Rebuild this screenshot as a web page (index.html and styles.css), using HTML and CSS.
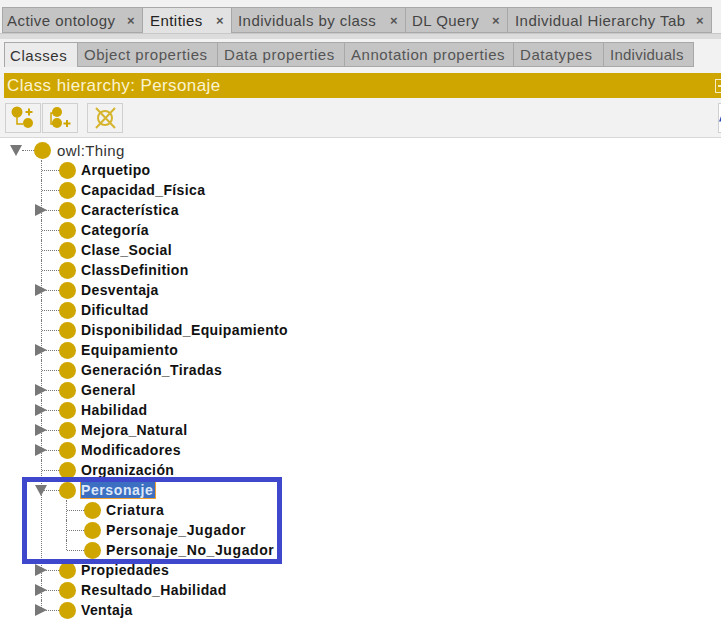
FILE: index.html
```html
<!DOCTYPE html>
<html lang="en">
<head>
    <meta charset="UTF-8">
    <meta name="viewport" content="width=device-width, initial-scale=1.0">
    <title>Class hierarchy</title>
    <link rel="stylesheet" href="styles.css">
</head>
<body>

    <div class="main-tabs">
        <div class="tab tab-1">Active ontology<span class="close">×</span></div>
        <div class="tab tab-2 active">Entities<span class="close">×</span></div>
        <div class="tab tab-3">Individuals by class<span class="close">×</span></div>
        <div class="tab tab-4">DL Query<span class="close">×</span></div>
        <div class="tab tab-5">Individual Hierarchy Tab<span class="close">×</span></div>
    </div>
    <div class="main-rule"></div>

    <div class="sub-tabs">
        <div class="sub-tab sub-1 active">Classes</div>
        <div class="sub-tab sub-2">Object properties</div>
        <div class="sub-tab sub-3">Data properties</div>
        <div class="sub-tab sub-4">Annotation properties</div>
        <div class="sub-tab sub-5">Datatypes</div>
        <div class="sub-tab sub-6">Individuals</div>
    </div>

    <div class="view-bar">
        <span>Class hierarchy: Personaje</span>
        <span class="view-btn"></span>
    </div>

    <div class="toolbar">
        <button class="tool" type="button">
            <svg width="28" height="26" viewBox="0 0 28 26">
                <circle cx="8" cy="7" r="5.5" fill="#cfa600"/>
                <circle cx="19" cy="18" r="5" fill="#cfa600"/>
                <path d="M8 12V19H14" fill="none" stroke="#cfa600" stroke-width="1.5"/>
                <path d="M16.500 7H23.500M20 3.500V10.500" fill="none" stroke="#cfa600" stroke-width="2"/>
            </svg>
        </button>
        <button class="tool" type="button">
            <svg width="28" height="26" viewBox="0 0 28 26">
                <circle cx="11" cy="7" r="5" fill="#cfa600"/>
                <circle cx="11" cy="18" r="5" fill="#cfa600"/>
                <path d="M7 8H5V19H7" fill="none" stroke="#cfa600" stroke-width="1.5"/>
                <path d="M17.500 18.500H24.500M21 15V22" fill="none" stroke="#cfa600" stroke-width="2"/>
            </svg>
        </button>
        <button class="tool tool-gap" type="button">
            <svg width="28" height="26" viewBox="0 0 28 26">
                <circle cx="14" cy="13" r="7" fill="none" stroke="#d6b52e" stroke-width="2"/>
                <path d="M5 3L24 23M24 3L5 23" fill="none" stroke="#d6b52e" stroke-width="2"/>
            </svg>
        </button>
        <span class="tool-end">
            <svg width="9" height="10" viewBox="0 0 9 10">
                <path d="M0 9L3 1L6 9Z" fill="#2b4bb0"/>
                <path d="M3 9L4.500 5L6 9Z" fill="#e08a20"/>
            </svg>
        </span>
    </div>

    <div class="tree">
        <div class="root">
            <span class="toggle down root-toggle"></span>
            <span class="root-dash"></span>
            <div class="row"><span class="dot"></span><span class="label plain">owl:Thing</span></div>
            <ul>
                <li><div class="row"><span class="dot"></span><span class="label">Arquetipo</span></div></li>
                <li><div class="row"><span class="dot"></span><span class="label">Capacidad_Física</span></div></li>
                <li><span class="toggle"></span><div class="row"><span class="dot"></span><span class="label">Característica</span></div></li>
                <li><div class="row"><span class="dot"></span><span class="label">Categoría</span></div></li>
                <li><div class="row"><span class="dot"></span><span class="label">Clase_Social</span></div></li>
                <li><div class="row"><span class="dot"></span><span class="label">ClassDefinition</span></div></li>
                <li><span class="toggle"></span><div class="row"><span class="dot"></span><span class="label">Desventaja</span></div></li>
                <li><div class="row"><span class="dot"></span><span class="label">Dificultad</span></div></li>
                <li><div class="row"><span class="dot"></span><span class="label">Disponibilidad_Equipamiento</span></div></li>
                <li><span class="toggle"></span><div class="row"><span class="dot"></span><span class="label">Equipamiento</span></div></li>
                <li><div class="row"><span class="dot"></span><span class="label">Generación_Tiradas</span></div></li>
                <li><span class="toggle"></span><div class="row"><span class="dot"></span><span class="label">General</span></div></li>
                <li><span class="toggle"></span><div class="row"><span class="dot"></span><span class="label">Habilidad</span></div></li>
                <li><span class="toggle"></span><div class="row"><span class="dot"></span><span class="label">Mejora_Natural</span></div></li>
                <li><span class="toggle"></span><div class="row"><span class="dot"></span><span class="label">Modificadores</span></div></li>
                <li><div class="row"><span class="dot"></span><span class="label">Organización</span></div></li>
                <li>
                    <span class="highlight"></span>
                    <span class="toggle down"></span>
                    <div class="row"><span class="dot"></span><span class="label selected">Personaje</span></div>
                    <ul class="nested">
                        <li><div class="row"><span class="dot"></span><span class="label">Criatura</span></div></li>
                        <li><div class="row"><span class="dot"></span><span class="label">Personaje_Jugador</span></div></li>
                        <li><div class="row"><span class="dot"></span><span class="label">Personaje_No_Jugador</span></div></li>
                    </ul>
                </li>
                <li><span class="toggle"></span><div class="row"><span class="dot"></span><span class="label">Propiedades</span></div></li>
                <li><span class="toggle"></span><div class="row"><span class="dot"></span><span class="label">Resultado_Habilidad</span></div></li>
                <li><span class="toggle"></span><div class="row"><span class="dot"></span><span class="label">Ventaja</span></div></li>
            </ul>
        </div>
    </div>

</body>
</html>
```

FILE: styles.css
```css
html, body {
    height: 100%;
}
body {
    margin: 0;
    overflow: hidden;
    background: #f2f2f2;
    font-family: "Liberation Sans", Arial, sans-serif;
    font-size: 14px;
    color: #111;
}

/* top tabs */
.main-tabs {
    display: flex;
    height: 26px;
    margin-top: 7px;
    padding-left: 2px;
}
.tab {
    display: flex;
    align-items: center;
    justify-content: space-between;
    box-sizing: border-box;
    padding: 0 5px 0 4px;
    background: #c4c4c4;
    border: 1px solid #a8a8a8;
    border-left-width: 0;
    color: #444;
    font-size: 15px;
    letter-spacing: 0.45px;
}
.tab-1 { width: 141px; border-left-width: 1px; }
.tab-2 { width: 89px; padding-left: 7px; }
.tab-3 { width: 174px; padding-left: 6px; }
.tab-4 { width: 102px; padding-left: 6px; }
.tab-5 { width: 204px; padding-left: 7px; }
.tab.active {
    background: #e2e2e2;
    color: #222;
    border-bottom: 0;
}
.close {
    font-size: 13px;
    font-weight: bold;
    color: #555;
    margin-right: 2px;
}
.main-rule {
    height: 5px;
    background: #dcdcdc;
    border-top: 1px solid #c8c8c8;
}

/* second row of tabs */
.sub-tabs {
    display: flex;
    height: 25px;
    margin-top: 3px;
    padding-left: 4px;
}
.sub-tab {
    display: flex;
    align-items: center;
    box-sizing: border-box;
    padding-left: 6px;
    background: #c4c4c4;
    border: 1px solid #a8a8a8;
    border-left-width: 0;
    color: #555;
    font-size: 15px;
    letter-spacing: 0.55px;
}
.sub-1 { width: 74px; padding-left: 5px; }
.sub-2 { width: 140px; }
.sub-3 { width: 127px; }
.sub-4 { width: 169px; }
.sub-5 { width: 90px; }
.sub-6 { width: 90px; letter-spacing: 0.25px; }
.sub-tab.active {
    background: #ebebeb;
    color: #333;
    border-left-width: 1px;
    border-bottom: 0;
}

.view-bar {
    display: flex;
    justify-content: space-between;
    align-items: center;
    height: 25px;
    margin: 6px 0 0 4px;
    padding-left: 3px;
    background: #cfa600;
    color: #fbf3d0;
    font-size: 17px;
    letter-spacing: 0.4px;
}
.view-btn {
    width: 14px;
    height: 14px;
    margin-right: -8px;
    border: 1px solid #f6ecc0;
    border-right-width: 0;
    box-sizing: border-box;
    flex-shrink: 0;
    background: linear-gradient(#f6ecc0, #f6ecc0) 2px 5px / 6px 2px no-repeat;
}

.toolbar {
    display: flex;
    height: 30px;
    margin-top: 5px;
    padding-left: 5px;
    gap: 1px;
}
.tool {
    display: flex;
    align-items: center;
    justify-content: center;
    width: 36px;
    height: 30px;
    padding: 0;
    background: #f2f2f2;
    border: 1px solid #d0d0d0;
}
.tool-gap {
    margin-left: 8px;
}
.tool-end {
    display: flex;
    align-items: center;
    width: 10px;
    height: 30px;
    margin-left: auto;
    margin-right: -7px;
    background: #fff;
    border: 1px solid #d0d0d0;
    box-sizing: border-box;
}

/* class tree */
.tree {
    height: 491px;
    margin-top: 4px;
    padding: 2px 0 0 34px;
    background: #fff;
    border-top: 1px solid #d8d8d8;
    box-sizing: border-box;
}
.root {
    position: relative;
}
.tree ul {
    list-style: none;
    margin: 0;
    padding: 0;
}
.tree li {
    position: relative;
    padding-left: 25px;
}
.tree li::before {
    content: "";
    position: absolute;
    left: 7px;
    top: 0;
    bottom: 0;
    border-left: 1px dotted #777;
}
.tree li:last-child::before {
    bottom: auto;
    height: 10px;
}
.tree li::after {
    content: "";
    position: absolute;
    left: 8px;
    top: 10px;
    width: 17px;
    border-top: 1px dotted #777;
}
.row {
    display: flex;
    align-items: center;
    gap: 5px;
    height: 20px;
}
.dot {
    width: 17px;
    height: 17px;
    border-radius: 50%;
    background: #cfa600;
    flex-shrink: 0;
}
.label {
    position: relative;
    font-weight: bold;
    white-space: nowrap;
    letter-spacing: 0.38px;
}
.nested .label {
    letter-spacing: 0.6px;
}
.label.plain {
    font-weight: normal;
    font-size: 15px;
    color: #333;
    margin-left: 1px;
}
.label.selected {
    padding-right: 2px;
    background: #3c6ec2;
    color: #dce8f8;
    outline: 1px solid #f0a030;
    line-height: 16px;
    letter-spacing: 0.6px;
}
.toggle {
    position: absolute;
    z-index: 1;
    left: 1px;
    top: 4px;
    width: 0;
    height: 0;
    border-left: 12px solid #777;
    border-top: 6px solid transparent;
    border-bottom: 6px solid transparent;
}
.toggle.down {
    top: 5px;
    border-top: 11px solid #777;
    border-left: 6px solid transparent;
    border-right: 6px solid transparent;
    border-bottom: 0;
}
.root-toggle {
    left: -24px;
}
.root-dash {
    position: absolute;
    left: -12px;
    top: 10px;
    width: 12px;
    border-top: 1px dotted #777;
}
.highlight {
    position: absolute;
    z-index: 2;
    left: -12px;
    top: -3px;
    width: 260px;
    height: 87px;
    box-sizing: border-box;
    border: 5px solid #3f48cc;
}
```
